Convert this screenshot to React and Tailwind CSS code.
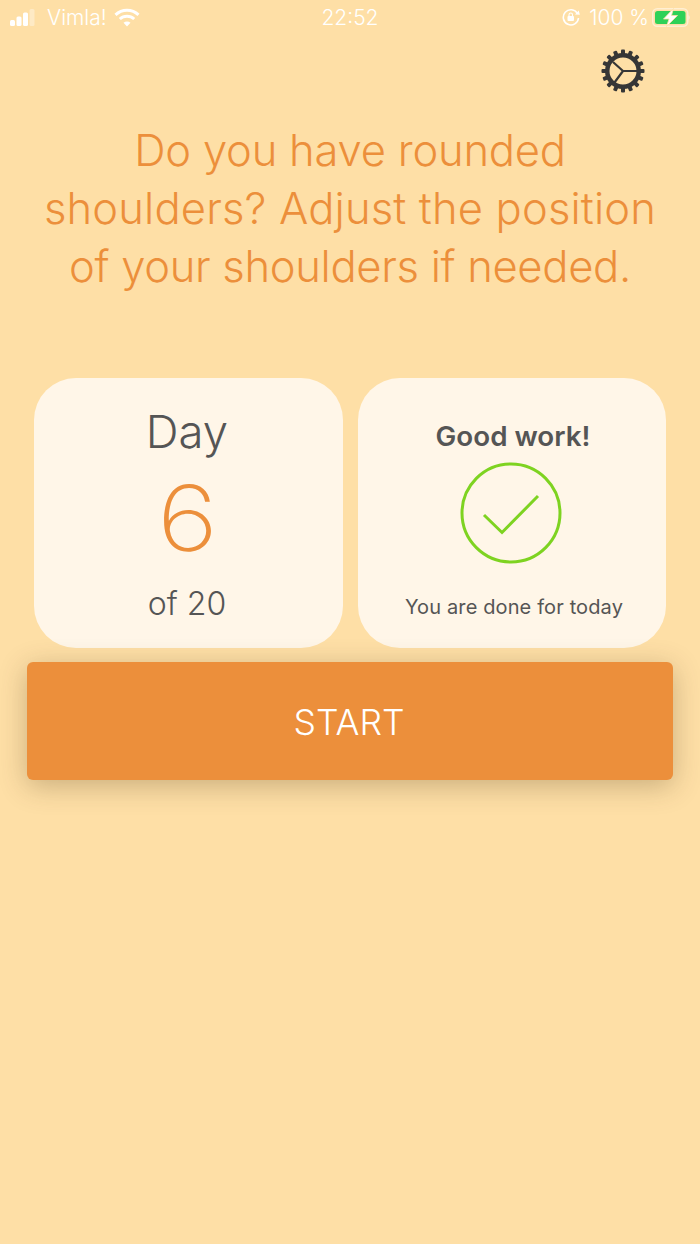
const teeth = Array.from({ length: 16 }, (_, i) => i * 22.5);

const SignalBars = () => (
  <svg width="25" height="18" viewBox="0 0 25 18" fill="#fff">
    <rect x="0" y="12" width="5" height="6" rx="1.5" />
    <rect x="6.5" y="8.5" width="5" height="9.5" rx="1.5" />
    <rect x="13" y="4.5" width="5" height="13.5" rx="1.5" />
    <rect x="19.5" y="1" width="5" height="17" rx="1.5" opacity="0.35" />
  </svg>
);

const Wifi = () => (
  <svg width="26" height="19" viewBox="0 0 26 19" fill="none" stroke="#fff" strokeWidth="3">
    <path d="M1.5 6.8C8 .6 18 .6 24.5 6.8" />
    <path d="M5.8 11C9.9 7.2 16.100 7.200 20.200 11" />
    <path d="M13 18.500L9.500 14.800C11.500 13.200 14.500 13.200 16.500 14.800Z" fill="#fff" stroke="none" />
  </svg>
);

const RotationLock = () => (
  <svg width="18" height="18" viewBox="0 0 18 18" fill="none">
    <path d="M15.500 5.500A7.600 7.600 0 1 0 16.500 10" stroke="#fff" strokeWidth="1.600" />
    <path d="M13 6.500L17.800 6.800L16.800 2.500Z" fill="#fff" />
    <rect x="5.500" y="8" width="6.500" height="5" rx="1" fill="#fff" />
    <path d="M7 8V6.700A1.750 1.750 0 0 1 10.500 6.700V8" stroke="#fff" strokeWidth="1.100" />
  </svg>
);

const Battery = () => (
  <svg width="38" height="19" viewBox="0 0 38 19" fill="none">
    <rect x="0.750" y="0.750" width="35" height="17.500" rx="4.500" stroke="#fff" strokeOpacity="0.5" strokeWidth="1.500" />
    <rect x="3" y="3" width="30.500" height="13" rx="2.500" fill="#2fd158" />
    <path d="M36.500 7V12C37.300 11.500 37.800 10.700 37.800 9.500S37.300 7.500 36.500 7Z" fill="#fff" fillOpacity="0.5" />
    <path d="M21.500 0.500L11.500 11H17L14.500 18.500L25.500 7.500H19.500Z" fill="#fff" stroke="#fedfa6" strokeWidth="0.800" />
  </svg>
);

const Gear = () => (
  <svg width="44" height="44" viewBox="0 0 44 44" fill="none" stroke="#363636">
    {teeth.map((deg) => (
      <rect key={deg} x="20" y="0.500" width="4" height="7" rx="1" fill="#363636" stroke="none" transform={`rotate(${deg} 22 22)`} />
    ))}
    <circle cx="22" cy="22" r="15.750" strokeWidth="4.500" />
    <path d="M22 22L12 13M22 22L36 22M22 22L13.500 33.500" strokeWidth="2.200" />
  </svg>
);

const CheckCircle = () => (
  <svg width="102" height="102" viewBox="0 0 102 102" fill="none" stroke="#7ed321" strokeWidth="3">
    <circle cx="51" cy="51" r="49" />
    <path d="M24 53L42 70.500L78 34" />
  </svg>
);

const App = () => {
  return (
    <div className="min-h-[1244px] bg-[#fedfa6] font-['Inter','Liberation_Sans',sans-serif] flex flex-col">
      <div className="h-[34px] px-[10px] grid grid-cols-3 items-center text-white text-[21px] leading-none">
        <div className="flex items-center">
          <SignalBars />
          <span className="ml-[12px] mr-[7px] font-[350]">Vimla!</span>
          <Wifi />
        </div>
        <div className="text-center font-[350]">22:52</div>
        <div className="flex items-center justify-end gap-[9px]">
          <RotationLock />
          <div className="flex items-center gap-[3px]">
            <span className="font-[350]">100 %</span>
            <Battery />
          </div>
        </div>
      </div>

      <div className="flex justify-end pr-[55px] pt-[15px]">
        <Gear />
      </div>

      <h1 className="mt-[28px] text-center text-[43.5px] leading-[58px] font-[350] text-[#ec8f3b]">
        <span className="block tracking-[-0.2px]">Do you have rounded</span>
        <span className="block tracking-[0.17px]">shoulders? Adjust the position</span>
        <span className="block tracking-[-0.3px]">of your shoulders if needed.</span>
      </h1>

      <div className="mt-[83px] px-[34px] flex gap-[15px]">
        <div className="w-[309px] h-[270px] rounded-[42px] pr-[3px] bg-[#fff6e8] flex flex-col items-center text-[#555555]">
          <div className="mt-[27px] text-[45.5px] leading-[54px] font-light">Day</div>
          <div className="mt-[3px] ml-[1px] text-[91px] leading-[112px] font-[150] scale-x-[1.15] text-[#ec8f3b]">6</div>
          <div className="mt-[10px] text-[32px] leading-[40px] font-light">of 20</div>
        </div>
        <div className="w-[308px] h-[270px] rounded-[42px] bg-[#fff6e8] flex flex-col items-center text-[#555555]">
          <div className="mt-[40px] ml-[2px] text-[27.75px] leading-[36px] font-semibold">Good work!</div>
          <div className="mt-[8px] mr-[3px]">
            <CheckCircle />
          </div>
          <div className="mt-[28px] ml-[4px] text-[20px] leading-[30px] tracking-[0.13px]">You are done for today</div>
        </div>
      </div>

      <div className="mt-[14px] px-[27px]">
        <button className="w-full h-[118px] rounded-[6px] bg-[#ec8f3b] text-white text-[35.5px] font-[350] shadow-[0_6px_28px_rgba(80,60,30,0.3)] pr-[2px] pt-[3px]">
          START
        </button>
      </div>
    </div>
  );
};

export default App;
